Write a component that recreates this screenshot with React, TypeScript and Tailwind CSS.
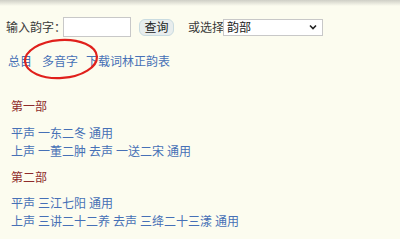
import React from "react";

const Row = ({ items }: { items: string[] }) => (
  <div className="flex gap-[3px] h-[18px] items-center">
    {items.map((t, i) => (
      <span key={i} className="text-[#4670b6]">{t}</span>
    ))}
  </div>
);

export default function App() {
  return (
    <div
      className="relative w-[400px] h-[239px] overflow-hidden bg-[#fcfcef] text-[12px] text-[#333]"
      style={{ fontFamily: '"Noto Sans CJK SC", "Noto Sans", sans-serif' }}
    >
      <div className="h-[6px] bg-gradient-to-b from-[#cfcfc6] to-[#fcfcef]" />
      <div className="flex items-center pl-[6px] mt-[11px] h-[20px]">
        <span className="text-[#3a3a3a]">输入韵字：</span>
        <input className="ml-[-3px] w-[68px] h-[20px] bg-white border border-[#c8c8c8] outline-none" />
        <button className="ml-[8px] w-[35px] h-[17px] rounded-[6px] bg-[#e8eded] border border-[#c9dbe0] text-[12px] text-[#222] leading-none flex items-center justify-center">
          查询
        </button>
        <span className="ml-[14px] text-[#3a3a3a]">或选择</span>
        <div className="ml-[-1px] w-[100px] h-[17px] bg-white border border-[#c8c8c8] flex items-center justify-between pl-[3px] pr-[5px]">
          <span className="text-[#222] leading-none">韵部</span>
          <svg width="8" height="6" viewBox="0 0 8 6">
            <path d="M1 1.5 L4 4.5 L7 1.5" fill="none" stroke="#222" strokeWidth="1.6" />
          </svg>
        </div>
      </div>
      <div className="flex items-center pl-[8px] mt-[15px] h-[18px] text-[#4670b6]">
        <span>总目</span>
        <span className="ml-[10px]">多音字</span>
        <span className="ml-[8px]">下载词林正韵表</span>
      </div>
      <div className="pl-[11px] mt-[27px]">
        <div className="text-[#8e2b2b] h-[18px] flex items-center">第一部</div>
        <div className="mt-[9px]">
          <Row items={["平声", "一东二冬", "通用"]} />
          <Row items={["上声", "一董二肿", "去声", "一送二宋", "通用"]} />
        </div>
        <div className="text-[#8e2b2b] h-[18px] flex items-center mt-[8px]">第二部</div>
        <div className="mt-[8px]">
          <Row items={["平声", "三江七阳", "通用"]} />
          <Row items={["上声", "三讲二十二养", "去声", "三绛二十三漾", "通用"]} />
        </div>
      </div>
      <svg className="absolute left-0 top-0 pointer-events-none" width="400" height="239">
        <ellipse cx="61" cy="59" rx="36" ry="19" transform="rotate(-4 61 59)" fill="none" stroke="#e0201c" strokeWidth="2.2" />
      </svg>
    </div>
  );
}
